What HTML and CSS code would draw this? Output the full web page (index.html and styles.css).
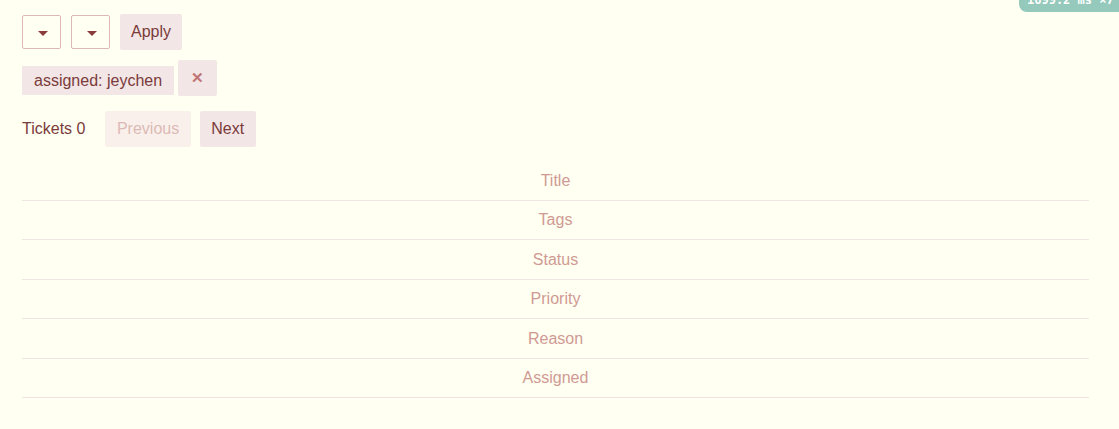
FILE: index.html
```html
<!DOCTYPE html>
<html>
<head>
<meta charset="utf-8">
<link rel="stylesheet" href="styles.css">
</head>
<body>
<div class="timing">1699.2 ms ×7</div>
<div class="page">
  <div class="filters">
    <button class="dropdown"><span class="caret"></span></button>
    <button class="dropdown"><span class="caret"></span></button>
    <button class="btn">Apply</button>
  </div>
  <div class="chips">
    <span class="chip">assigned: jeychen</span>
    <button class="btn close">✕</button>
  </div>
  <div class="pager">
    <span class="count">Tickets 0</span>
    <button class="btn disabled">Previous</button>
    <button class="btn">Next</button>
  </div>
  <div class="table">
    <div class="row">Title</div>
    <div class="row">Tags</div>
    <div class="row">Status</div>
    <div class="row">Priority</div>
    <div class="row">Reason</div>
    <div class="row">Assigned</div>
  </div>
</div>
</body>
</html>
```
FILE: styles.css
```css
html, body { margin: 0; padding: 0; }
body {
  background: #fffff2;
  font-family: "Liberation Sans", Arial, sans-serif;
  font-size: 16px;
  color: #7a3b3b;
  width: 1119px;
  height: 429px;
  overflow: hidden;
  position: relative;
}
.timing {
  position: absolute;
  top: -7px;
  left: 1019px;
  width: 100px;
  height: 19px;
  background: #94c9bb;
  color: #ffffff;
  font-family: "DejaVu Sans Mono", monospace;
  font-size: 12px;
  font-weight: bold;
  line-height: 14px;
  padding-left: 8px;
  box-sizing: border-box;
  border-bottom-left-radius: 8px;
  white-space: nowrap;
  overflow: hidden;
}
.page {
  padding: 14px 30px 0 22px;
  display: flex;
  flex-direction: column;
}
button {
  font-family: inherit;
  font-size: 16px;
  border: none;
  margin: 0;
  cursor: pointer;
}
.filters {
  display: flex;
  align-items: center;
  gap: 10px;
  height: 36px;
}
.dropdown {
  width: 39px;
  height: 34px;
  background: transparent;
  border: 1px solid #dfb8b4;
  border-radius: 2px;
  display: flex;
  align-items: center;
  justify-content: center;
  padding: 0;
}
.caret {
  width: 0; height: 0;
  border-left: 5px solid transparent;
  border-right: 5px solid transparent;
  border-top: 5px solid #8a3b3b;
  margin-top: 2px;
  margin-left: 2px;
}
.btn {
  height: 36px;
  padding: 0 11px;
  background: #f3e6e6;
  color: #7a3b3b;
  border-radius: 2px;
}
.chips {
  display: flex;
  align-items: flex-start;
  gap: 4px;
  margin-top: 10px;
  height: 36px;
}
.chip {
  display: inline-flex;
  align-items: center;
  height: 29px;
  padding: 0 12px;
  background: #f3e6e6;
  color: #7a3b3b;
  margin-top: 6px;
}
.close {
  width: 39px;
  padding: 0;
  color: #c07575;
  font-size: 15px;
  font-weight: bold;
}
.pager {
  display: flex;
  align-items: center;
  margin-top: 15px;
  height: 36px;
}
.count { color: #7a3b3b; margin-right: 20px; }
.pager .btn { padding: 0 11.5px; }
.pager .disabled {
  background: #f9f0ec;
  color: #dcbab4;
  margin-right: 9px;
}
.table {
  margin-top: 14px;
  width: 1067px;
}
.row {
  height: 39.5px;
  border-bottom: 1px solid #f1e4e2;
  box-sizing: border-box;
  display: flex;
  align-items: center;
  justify-content: center;
  color: #d09a92;
  padding-top: 1px;
}
```
